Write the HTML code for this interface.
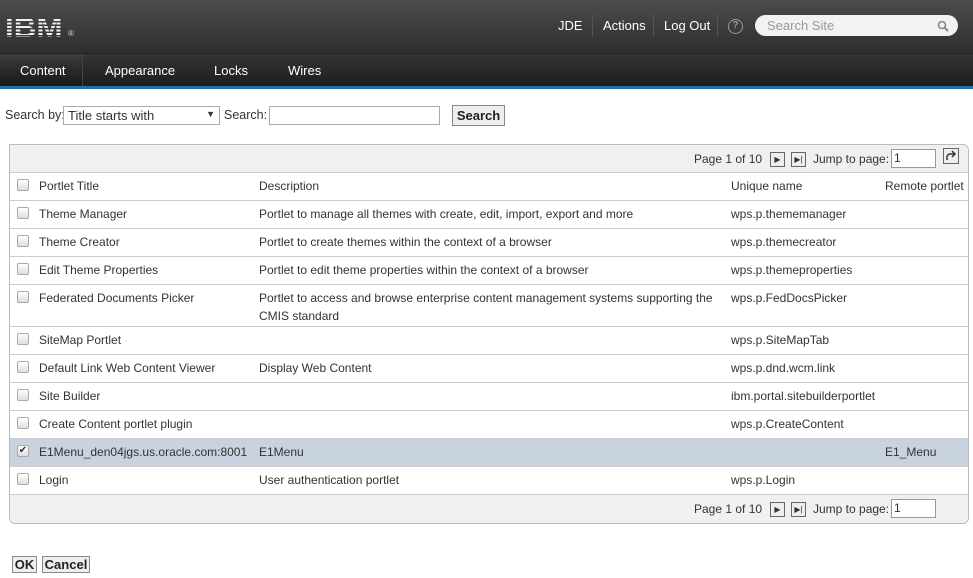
<!DOCTYPE html>
<html><head><meta charset="utf-8"><style>
*{margin:0;padding:0;box-sizing:border-box}
body{width:973px;height:578px;overflow:hidden;background:#fff;font-family:"Liberation Sans",Arial,sans-serif;font-size:12px;color:#333;position:relative}
.hdr{position:absolute;left:0;top:0;width:973px;height:54px;background:linear-gradient(#4c4c4c,#2e2e2e);border-bottom:1px solid #222}
.logo{position:absolute;left:5px;top:12px;font:bold 28px "Liberation Sans",sans-serif;letter-spacing:0px;background:repeating-linear-gradient(#eee 0 2px,transparent 2px 3.5px);-webkit-background-clip:text;color:transparent;transform:scaleX(1.12);transform-origin:left}
.reg{position:absolute;left:68px;top:29px;color:#ddd;font-size:8px}
.tl{position:absolute;top:18px;color:#fff;font-size:13px}
.sep{position:absolute;top:15px;width:1px;height:22px;background:#555}
.help{position:absolute;left:728px;top:19px;width:15px;height:15px;border:1.5px solid #999;border-radius:50%;color:#999;font-size:10px;text-align:center;line-height:12px;font-weight:bold}
.srch{position:absolute;left:755px;top:15px;width:203px;height:21px;border-radius:11px;background:#f2f2f2;color:#999;font-size:13px;padding:3px 12px}
.nav{position:absolute;left:0;top:54px;width:973px;background:linear-gradient(#343434,#1e1e1e);border-bottom:3px solid #0a7ab6;height:35px}
.nav span{position:absolute;top:9px;color:#fff;font-size:13px}
.act{position:absolute;left:0;top:0;width:83px;height:32px;background:linear-gradient(#3c3c3c,#181818);border-right:1px solid #444}
.sb{position:absolute;top:108px;font-size:12.5px}
.sel{position:absolute;left:63px;top:106px;width:157px;height:19px;border:1px solid #aaa;font-size:13px;padding:1px 4px}
.inp{position:absolute;left:269px;top:106px;width:171px;height:19px;border:1px solid #aaa}
.btn{position:absolute;border:1px solid #888;background:#eee;font-weight:bold;font-size:13px;color:#222;text-align:center}
.tbl{position:absolute;left:9px;top:144px;width:960px;height:380px;border:1px solid #bbb;border-radius:0 6px 6px 6px}
.bar{position:absolute;left:0;width:958px;height:28px;background:#f0f0f0}
.row{position:absolute;left:0;width:958px;border-top:1px solid #ccc}
.row span{position:absolute;top:6px;font-size:12px}
.cb{position:absolute;left:7px;top:6px;width:12px;height:12px;border:1px solid #aaa;border-radius:2px;background:linear-gradient(#fff,#ddd)}
.pg{position:absolute;font-size:12px}
.ib{position:absolute;width:15px;height:15px;border:1px solid #666;background:#eee;font-size:8px;text-align:center;line-height:13px}
</style></head><body>
<div class="hdr">
<div class="logo">IBM</div><div class="reg">®</div>
<span class="tl" style="left:558px">JDE</span><div class="sep" style="left:592px"></div>
<span class="tl" style="left:603px">Actions</span><div class="sep" style="left:653px"></div>
<span class="tl" style="left:664px">Log Out</span><div class="sep" style="left:717px"></div>
<div class="help">?</div>
<div class="srch">Search Site<svg style="position:absolute;right:9px;top:5px" width="12" height="12" viewBox="0 0 12 12"><circle cx="5" cy="5" r="3.5" fill="none" stroke="#888" stroke-width="1.6"/><path d="M7.5 7.5L11 11" stroke="#888" stroke-width="2"/></svg></div>
</div>
<div class="nav"><div class="act"></div>
<span style="left:20px">Content</span><span style="left:105px">Appearance</span><span style="left:214px">Locks</span><span style="left:288px">Wires</span></div>
<span class="sb" style="left:5px">Search by:</span>
<div class="sel">Title starts with<span style="position:absolute;right:4px;top:2px;font-size:9px">&#9660;</span></div>
<span class="sb" style="left:224px">Search:</span>
<div class="inp"></div>
<div class="btn" style="left:452px;top:105px;width:53px;height:21px;line-height:19px">Search</div>
<div class="tbl">
<div class="bar" style="top:0;border-radius:0 6px 0 0"></div>
<span class="pg" style="left:684px;top:7px">Page 1 of 10</span>
<div class="ib" style="left:760px;top:7px">&#9654;</div><div class="ib" style="left:781px;top:7px">&#9654;|</div>
<span class="pg" style="left:803px;top:7px">Jump to page:</span>
<div style="position:absolute;left:881px;top:4px;width:45px;height:19px;border:1px solid #999;background:#fff;padding:1px 2px">1</div>
<div class="ib" style="left:933px;top:3px;width:16px;height:16px"><svg width="14" height="14" viewBox="0 0 14 14"><path d="M3 11V8a3 3 0 0 1 3-3h5M8 2l3 3-3 3" fill="none" stroke="#333" stroke-width="1.5"/></svg></div>
<div class="row" style="top:27px;height:29px"><div class="cb"></div><span style="left:29px">Portlet Title</span><span style="left:249px">Description</span><span style="left:721px">Unique name</span><span style="left:875px">Remote portlet</span></div>
<div class="row" style="top:55px;height:28px"><div class="cb"></div><span style="left:29px">Theme Manager</span><span style="left:249px">Portlet to manage all themes with create, edit, import, export and more</span><span style="left:721px">wps.p.thememanager</span></div>
<div class="row" style="top:83px;height:28px"><div class="cb"></div><span style="left:29px">Theme Creator</span><span style="left:249px">Portlet to create themes within the context of a browser</span><span style="left:721px">wps.p.themecreator</span></div>
<div class="row" style="top:111px;height:28px"><div class="cb"></div><span style="left:29px">Edit Theme Properties</span><span style="left:249px">Portlet to edit theme properties within the context of a browser</span><span style="left:721px">wps.p.themeproperties</span></div>
<div class="row" style="top:139px;height:42px"><div class="cb"></div><span style="left:29px">Federated Documents Picker</span><span style="left:249px;width:470px;line-height:18px;top:4px">Portlet to access and browse enterprise content management systems supporting the CMIS standard</span><span style="left:721px">wps.p.FedDocsPicker</span></div>
<div class="row" style="top:181px;height:28px"><div class="cb"></div><span style="left:29px">SiteMap Portlet</span><span style="left:721px">wps.p.SiteMapTab</span></div>
<div class="row" style="top:209px;height:28px"><div class="cb"></div><span style="left:29px">Default Link Web Content Viewer</span><span style="left:249px">Display Web Content</span><span style="left:721px">wps.p.dnd.wcm.link</span></div>
<div class="row" style="top:237px;height:28px"><div class="cb"></div><span style="left:29px">Site Builder</span><span style="left:721px">ibm.portal.sitebuilderportlet</span></div>
<div class="row" style="top:265px;height:28px"><div class="cb"></div><span style="left:29px">Create Content portlet plugin</span><span style="left:721px">wps.p.CreateContent</span></div>
<div class="row" style="top:293px;height:28px;background:#c9d3e0"><div class="cb" style="font-size:10px;line-height:10px;text-align:center">&#10004;</div><span style="left:29px">E1Menu_den04jgs.us.oracle.com:8001</span><span style="left:249px">E1Menu</span><span style="left:875px">E1_Menu</span></div>
<div class="row" style="top:321px;height:28px"><div class="cb"></div><span style="left:29px">Login</span><span style="left:249px">User authentication portlet</span><span style="left:721px">wps.p.Login</span></div>
<div class="bar" style="top:349px;height:29px;border-top:1px solid #ccc;border-radius:0 0 6px 6px"></div>
<span class="pg" style="left:684px;top:357px">Page 1 of 10</span>
<div class="ib" style="left:760px;top:357px">&#9654;</div><div class="ib" style="left:781px;top:357px">&#9654;|</div>
<span class="pg" style="left:803px;top:357px">Jump to page:</span>
<div style="position:absolute;left:881px;top:354px;width:45px;height:19px;border:1px solid #999;background:#fff;padding:1px 2px">1</div>
</div>
<div class="btn" style="left:12px;top:556px;width:25px;height:17px;line-height:15px">OK</div>
<div class="btn" style="left:42px;top:556px;width:48px;height:17px;line-height:15px">Cancel</div>
</body></html>
